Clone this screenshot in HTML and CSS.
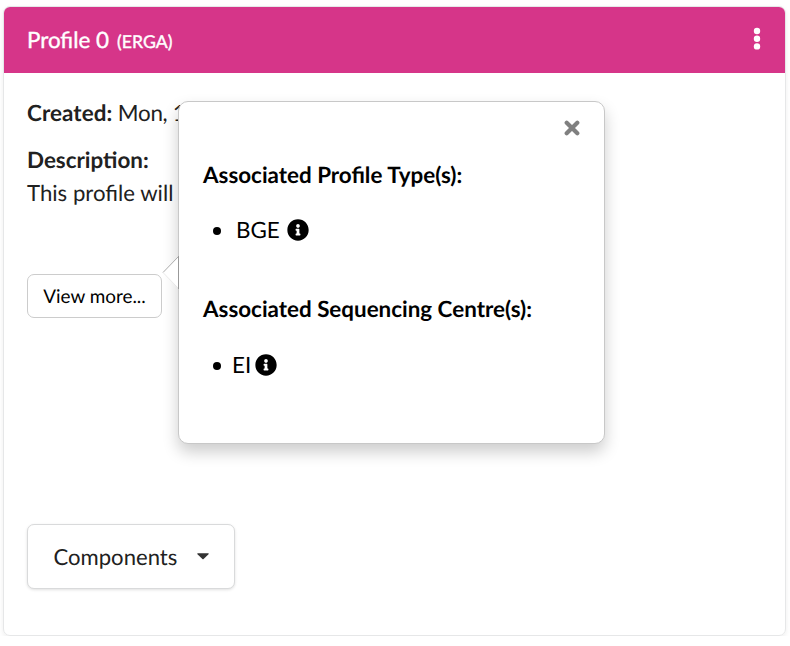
FILE: index.html
```html
<!DOCTYPE html>
<html lang="en">
<head>
<meta charset="utf-8">
<title>Profile</title>
<link rel="stylesheet" href="styles.css">
</head>
<body>
<article class="card">
  <header class="card-header">
    <h1 class="title"><span class="name">Profile 0</span><span class="type">(ERGA)</span></h1>
    <svg class="dots" width="8" height="24" viewBox="0 0 8 24"><g fill="#fff"><circle cx="4" cy="4" r="3.2"/><circle cx="4" cy="11.7" r="3.2"/><circle cx="4" cy="19.4" r="3.2"/></g></svg>
  </header>
  <div class="card-body">
    <p class="created"><b>Created:</b> Mon, 1</p>
    <p class="description"><b>Description:</b><br><span class="summary">This profile will</span></p>
    <button class="view-more">View more...</button>
    <button class="components">Components <svg width="12" height="7" viewBox="0 0 12 7"><path d="M.7.3h10.6q.8.2.2 1L6.6 6.1q-.6.5-1.2 0L.5 1.3Q-.1.5.7.3z" fill="#333"/></svg></button>
  </div>
</article>
<aside class="popover">
  <svg class="arrow" width="17" height="34" viewBox="0 0 17 34"><path d="M17 0 1 16.5 17 33z" fill="#fff"/><path d="M16.5 .5 1 16.5" fill="none" stroke="#aaa"/><path d="M1 16.5 16.5 32.5" fill="none" stroke="#ddd" stroke-width=".6"/><path d="M16.5 0v33" stroke="#999"/></svg>
  <svg class="close" width="16" height="16" viewBox="0 0 16 16"><path d="M2.7 2.7l10.6 10.6M13.3 2.7 2.7 13.3" fill="none" stroke="#808080" stroke-width="4.2" stroke-linecap="round"/></svg>
  <section class="group">
    <h2>Associated Profile Type(s):</h2>
    <ul><li><span class="item spaced">BGE</span><svg class="info" width="22" height="22" viewBox="0 0 512 512"><path fill="#000" d="M256 8C119 8 8 119.100 8 256c0 137 111 248 248 248s248-111 248-248C504 119.100 393 8 256 8zm0 110c23.200 0 42 18.800 42 42s-18.800 42-42 42-42-18.800-42-42 18.800-42 42-42zm56 254c0 6.600-5.400 12-12 12h-88c-6.600 0-12-5.400-12-12v-24c0-6.600 5.400-12 12-12h12v-64h-12c-6.600 0-12-5.400-12-12v-24c0-6.600 5.400-12 12-12h64c6.600 0 12 5.400 12 12v100h12c6.600 0 12 5.400 12 12v24z"/></svg></li></ul>
  </section>
  <section class="group">
    <h2>Associated Sequencing Centre(s):</h2>
    <ul><li><span class="item">EI</span><svg class="info" width="22" height="22" viewBox="0 0 512 512"><path fill="#000" d="M256 8C119 8 8 119.100 8 256c0 137 111 248 248 248s248-111 248-248C504 119.100 393 8 256 8zm0 110c23.200 0 42 18.800 42 42s-18.800 42-42 42-42-18.800-42-42 18.800-42 42-42zm56 254c0 6.600-5.400 12-12 12h-88c-6.600 0-12-5.400-12-12v-24c0-6.600 5.400-12 12-12h12v-64h-12c-6.600 0-12-5.400-12-12v-24c0-6.600 5.400-12 12-12h64c6.600 0 12 5.400 12 12v100h12c6.600 0 12 5.400 12 12v24z"/></svg></li></ul>
  </section>
</aside>
</body>
</html>
```
FILE: styles.css
```css
* { box-sizing: border-box; }
body { margin: 0; padding: 6px 4px 0 3px; background: #fff; color: #212121; font: 22.4px/33px Lato, sans-serif; text-rendering: geometricPrecision; }
h1, h2, p, ul { margin: 0; padding: 0; }
button { font-family: inherit; text-rendering: inherit; background: #fff; cursor: pointer; }
.card { height: 630px; border: 1px solid #e6e7e8; border-radius: 7px; overflow: hidden; box-shadow: 0 2px 5px rgba(0,0,0,.07); }
.card-header { height: 66px; padding: 0 24px 2px 23px; background: #d63589; display: flex; align-items: center; justify-content: space-between; }
.title { padding-top: 2px; color: #fff; font-size: 22.4px; font-weight: 400; display: flex; align-items: baseline; gap: 8px; -webkit-text-stroke: .4px #fff; }
.type { font-size: 17.7px; }
.card-body { padding: 23px 23px; display: flex; flex-direction: column; align-items: flex-start; }
.created { margin-bottom: 14px; letter-spacing: -.3px; }
.created b { letter-spacing: .1px; }
.summary { font-size: 22.2px; }
.view-more { width: 135px; height: 44px; margin-top: 65px; padding: 0; border: 1px solid #ccc; border-radius: 7px; font-size: 18.9px; color: #000; }
.components { width: 208px; height: 65px; margin-top: 206px; padding: 0 25px 0 25.5px; display: flex; align-items: center; justify-content: space-between; border: 1px solid #d9dadb; border-radius: 7px; box-shadow: 0 1px 3px rgba(0,0,0,.12); font-size: 22.1px; color: #212121; }
.popover { position: absolute; left: 178px; top: 101px; width: 427px; height: 343px; padding: 56px 24px 0; background: #fff; border: 1px solid #c8c8c8; border-radius: 10px; box-shadow: 0 8px 16px rgba(0,0,0,.2); color: #000; }
.arrow { position: absolute; left: -17px; top: 154px; }
.close { position: absolute; right: 24px; top: 18px; }
.group { height: 134px; }
.group h2 { font-size: 22.4px; line-height: 33px; font-weight: 700; }
.group ul { list-style: none; margin-top: 22px; }
.group + .group ul { margin-top: 23px; }
.group li { display: flex; align-items: center; padding-left: 10px; height: 33px; }
.group li::before { content: ""; width: 8px; height: 8px; margin: 2px 11px 0 0; border-radius: 50%; background: #000; }
.item { margin-right: 4px; }
.spaced { margin: 0 7px 0 4px; }
```
